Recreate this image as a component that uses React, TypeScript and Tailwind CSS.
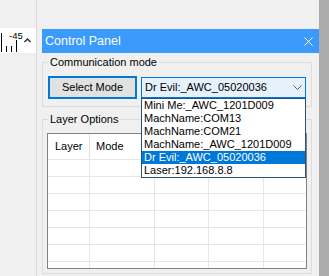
const items = [
  "Mini Me:_AWC_1201D009",
  "MachName:COM13",
  "MachName:COM21",
  "MachName:_AWC_1201D009",
  "Dr Evil:_AWC_05020036",
  "Laser:192.168.8.8",
];

function Ruler() {
  return (
    <div className="flex h-[25px] w-[36px] bg-white">
      <svg width="36" height="25" viewBox="0 0 36 25">
        <line x1="1.5" y1="5" x2="1.5" y2="24" stroke="#000" />
        <line x1="6.5" y1="18" x2="6.5" y2="24" stroke="#000" />
        <line x1="11.5" y1="18" x2="11.5" y2="24" stroke="#000" />
        <line x1="16.5" y1="12" x2="16.5" y2="24" stroke="#000" />
        <text x="9" y="11" fontSize="9.5" fontFamily="Liberation Sans, Arial, sans-serif" fill="#000">
          -45
        </text>
        <path d="M24.5 14 L27.5 11 L30.5 14" fill="none" stroke="#333" strokeWidth="1.5" />
      </svg>
    </div>
  );
}

export default function App() {
  return (
    <div className="flex h-[276px] w-[329px] overflow-hidden bg-[#f0f0f0] font-['Liberation_Sans',Arial,sans-serif] text-black">
      <div className="w-[36px] shrink-0 pt-[28px]">
        <Ruler />
      </div>

      <div className="flex flex-1 flex-col border-l border-[#dadada] pl-[5px] pt-[29px]">
        <div className="flex h-[24px] items-center justify-between bg-[#3a9bfc] pl-[3px] pr-[6px] text-[12.5px] text-white">
          <span>Control Panel</span>
          <svg width="9" height="9" viewBox="0 0 9 9">
            <path d="M0.5 0.5 L8.5 8.5 M8.5 0.5 L0.5 8.5" stroke="#fff" strokeWidth="1" />
          </svg>
        </div>

        <div className="pr-[7px] text-[11px] leading-[13px]">
          <fieldset className="mt-[3px] border border-[#dcdcdc] px-[5px] pb-[7px] pt-[7px]">
            <legend className="px-[2px]">Communication mode</legend>
            <div className="flex items-start gap-[4px]">
              <button className="h-[23px] w-[89px] border-2 border-[#0078d7] bg-[#e1e1e1] text-[11px]">
                Select Mode
              </button>
              <div className="relative mt-[1px] flex h-[21px] w-[165px] items-center justify-between border border-[#0078d7] bg-[#e5f1fb] pl-[3px] pr-[3px]">
                <span>Dr Evil:_AWC_05020036</span>
                <svg width="9" height="5" viewBox="0 0 9 5">
                  <path d="M0.5 0.5 L4.5 4.5 L8.5 0.5" fill="none" stroke="#606060" />
                </svg>
                <ul className="absolute left-[-1px] top-[20px] z-10 w-[165px] border border-[#2f4f73] bg-white">
                  {items.map((it) => (
                    <li
                      key={it}
                      className={
                        it === "Dr Evil:_AWC_05020036"
                          ? "h-[13px] bg-[#0078d7] pl-[2px] text-white"
                          : "h-[13px] pl-[2px]"
                      }
                    >
                      {it}
                    </li>
                  ))}
                </ul>
              </div>
            </div>
          </fieldset>

          <fieldset className="mt-[6px] border border-[#dcdcdc] px-[4px] pb-[4px] pt-[7px]">
            <legend className="ml-[1px] px-[2px]">Layer Options</legend>
            <div className="h-[136px] w-[260px] overflow-hidden border border-[#828282] bg-white">
              <div className="flex h-[25px]">
                <div className="flex w-[42px] items-center border-r border-[#e0e0e0] pl-[7px]">Layer</div>
                <div className="flex w-[65px] items-center border-r border-[#e0e0e0] pl-[6px]">Mode</div>
                <div className="w-[54px] border-r border-[#e0e0e0]" />
                <div className="w-[55px] border-r border-[#e0e0e0]" />
              </div>
              {[0, 1, 2, 3, 4, 5, 6].map((r) => (
                <div key={r} className="flex h-[17px] border-t border-[#e6e6e6]">
                  <div className="w-[42px] border-r border-[#e6e6e6]" />
                  <div className="w-[65px] border-r border-[#e6e6e6]" />
                  <div className="w-[54px] border-r border-[#e6e6e6]" />
                  <div className="w-[55px] border-r border-[#e6e6e6]" />
                </div>
              ))}
            </div>
          </fieldset>
        </div>
      </div>

      <div className="w-[12px] shrink-0 bg-[#ababab]" />
    </div>
  );
}
